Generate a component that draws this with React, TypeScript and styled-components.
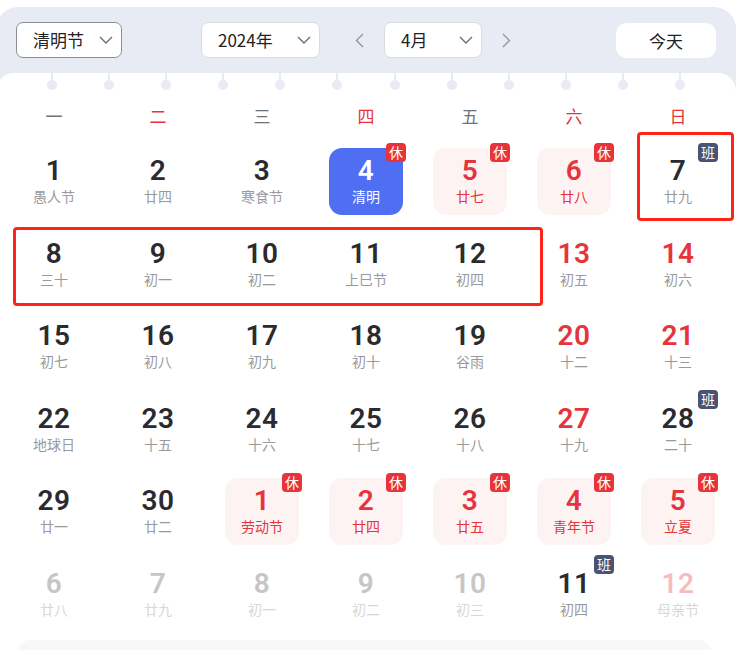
import React from 'react'
import styled, { createGlobalStyle } from 'styled-components'

type Kind = 'normal' | 'weekend' | 'rest' | 'today' | 'other' | 'otherRed'

type Day = {
    n: number,
    lunar: string,
    kind: Kind,
    badge?: '休' | '班',
}

const GlobalStyle = createGlobalStyle`
    html, body {
        margin: 0;
        padding: 0;
        background: #ffffff;
    }
    body {
        font-family: "Noto Sans CJK SC", "Noto Sans", sans-serif;
        color: #222;
    }
`

const d = (n: number, lunar: string, kind: Kind = 'normal', badge?: '休' | '班'): Day => ({ n, lunar, kind, badge })

const days: Day[] = [
    d(1, '愚人节'), d(2, '廿四'), d(3, '寒食节'), d(4, '清明', 'today', '休'), d(5, '廿七', 'rest', '休'), d(6, '廿八', 'rest', '休'), d(7, '廿九', 'normal', '班'),
    d(8, '三十'), d(9, '初一'), d(10, '初二'), d(11, '上巳节'), d(12, '初四'), d(13, '初五', 'weekend'), d(14, '初六', 'weekend'),
    d(15, '初七'), d(16, '初八'), d(17, '初九'), d(18, '初十'), d(19, '谷雨'), d(20, '十二', 'weekend'), d(21, '十三', 'weekend'),
    d(22, '地球日'), d(23, '十五'), d(24, '十六'), d(25, '十七'), d(26, '十八'), d(27, '十九', 'weekend'), d(28, '二十', 'normal', '班'),
    d(29, '廿一'), d(30, '廿二'), d(1, '劳动节', 'rest', '休'), d(2, '廿四', 'rest', '休'), d(3, '廿五', 'rest', '休'), d(4, '青年节', 'rest', '休'), d(5, '立夏', 'rest', '休'),
    d(6, '廿八', 'other'), d(7, '廿九', 'other'), d(8, '初一', 'other'), d(9, '初二', 'other'), d(10, '初三', 'other'), d(11, '初四', 'normal', '班'), d(12, '母亲节', 'otherRed'),
]

const weekdays = [
    { label: '一', red: false },
    { label: '二', red: true },
    { label: '三', red: false },
    { label: '四', red: true },
    { label: '五', red: false },
    { label: '六', red: true },
    { label: '日', red: true },
]

const numColor: Record<Kind, string> = {
    normal: '#2b2b2e',
    weekend: '#e6343c',
    rest: '#e6343c',
    today: '#ffffff',
    other: '#c6c6c6',
    otherRed: '#f6bcbf',
}

const lunarColor: Record<Kind, string> = {
    normal: '#999a9e',
    weekend: '#999a9e',
    rest: '#e6343c',
    today: '#ffffff',
    other: '#d8d8d8',
    otherRed: '#d8d8d8',
}

const Chevron = () => (
    <svg width="14" height="8" viewBox="0 0 14 8">
        <polyline points="1,1 7,7 13,1" fill="none" stroke="#6b6e75" strokeWidth="1.4" />
    </svg>
)

const Arrow = ({ dir }: { dir: 'left' | 'right' }) => (
    <svg width="9" height="15" viewBox="0 0 9 15">
        <polyline points={dir === 'left' ? '8,1 1.5,7.5 8,14' : '1,1 7.5,7.5 1,14'} fill="none" stroke="#92959c" strokeWidth="1.4" />
    </svg>
)

export default function App() {
    return (
        <Page>
            <GlobalStyle />
            <Panel>
                <Header>
                    <Select $width={106} $strong>
                        <span>清明节</span>
                        <Chevron />
                    </Select>
                    <Center>
                        <Select $width={119}>
                            <span>2024年</span>
                            <Chevron />
                        </Select>
                        <ArrowBtn $left={27} $right={13}><Arrow dir="left" /></ArrowBtn>
                        <Select $width={98}>
                            <span>4月</span>
                            <Chevron />
                        </Select>
                        <ArrowBtn $left={12} $right={0}><Arrow dir="right" /></ArrowBtn>
                    </Center>
                    <TodayBtn>今天</TodayBtn>
                </Header>
                <Body>
                    <Rings>
                        {Array.from({ length: 12 }).map((_, i) => <Ring key={i} />)}
                    </Rings>
                    <WeekRow>
                        {weekdays.map((w) => <WeekLabel key={w.label} $red={w.red}>{w.label}</WeekLabel>)}
                    </WeekRow>
                    <Grid>
                        {days.map((day, i) => (
                            <Cell key={i}>
                                <DayBox $kind={day.kind}>
                                    <Num $color={numColor[day.kind]}>{day.n}</Num>
                                    <Lunar $color={lunarColor[day.kind]}>{day.lunar}</Lunar>
                                    {day.badge && <Badge $work={day.badge === '班'}>{day.badge}</Badge>}
                                </DayBox>
                            </Cell>
                        ))}
                    </Grid>
                    <Footer />
                </Body>
            </Panel>
            <Mark style={{ left: 637, top: 132, width: 97, height: 89 }} />
            <Mark style={{ left: 13, top: 227, width: 530, height: 79 }} />
        </Page>
    )
}

const Page = styled.div`
    position: relative;
    width: 744px;
    height: 650px;
    overflow: hidden;
    padding-top: 7px;
    box-sizing: border-box;
`

const Panel = styled.div`
    margin-left: -4px;
    width: 740px;
    background: #e8ebf3;
    border-radius: 22px 22px 0 0;
`

const Header = styled.div`
    display: flex;
    align-items: center;
    height: 66px;
    padding: 0 20px;
`

const Select = styled.div<{ $width: number, $strong?: boolean }>`
    display: flex;
    align-items: center;
    justify-content: space-between;
    box-sizing: border-box;
    width: ${props => props.$width + 'px'};
    height: 36px;
    padding: 0 8px 0 16px;
    background: #ffffff;
    border: 1px solid ${props => props.$strong ? '#8b8e96' : '#d8dbe2'};
    border-radius: 7px;
    font-size: 17px;
    color: #222;

    span {
        line-height: 36px;
    }
`

const Center = styled.div`
    display: flex;
    align-items: center;
    margin-left: 79px;
`

const ArrowBtn = styled.div<{ $left: number, $right: number }>`
    display: flex;
    align-items: center;
    justify-content: center;
    width: 24px;
    height: 36px;
    margin-left: ${props => props.$left + 'px'};
    margin-right: ${props => props.$right + 'px'};
`

const TodayBtn = styled.div`
    display: flex;
    align-items: center;
    justify-content: center;
    margin-left: auto;
    width: 100px;
    height: 35px;
    background: #ffffff;
    border-radius: 10px;
    font-size: 17px;
    color: #222;
`

const Body = styled.div`
    background: #ffffff;
    border-radius: 18px 18px 0 0;
    padding: 0 6px;
    height: 600px;
`

const Rings = styled.div`
    display: grid;
    grid-template-columns: repeat(12, 57.15px);
    justify-content: center;
    height: 18px;
`

const Ring = styled.div`
    position: relative;
    height: 18px;

    &::before {
        content: "";
        position: absolute;
        left: 27.5px;
        top: 0;
        width: 2px;
        height: 9px;
        background: #e8ebf3;
    }
    &::after {
        content: "";
        position: absolute;
        left: 23.5px;
        top: 7px;
        width: 10px;
        height: 10px;
        border-radius: 50%;
        background: #e8ebf3;
    }
`

const WeekRow = styled.div`
    display: grid;
    grid-template-columns: repeat(7, 104px);
    height: 49px;
    align-items: center;
`

const WeekLabel = styled.div<{ $red: boolean }>`
    text-align: center;
    font-size: 17px;
    line-height: 20px;
    color: ${props => props.$red ? '#e6343c' : '#6f7278'};
`

const Grid = styled.div`
    display: grid;
    grid-template-columns: repeat(7, 104px);
    grid-auto-rows: 82.5px;
`

const Cell = styled.div`
    display: flex;
    align-items: center;
    justify-content: center;
`

const DayBox = styled.div<{ $kind: Kind }>`
    position: relative;
    display: flex;
    flex-direction: column;
    align-items: center;
    justify-content: center;
    width: 74px;
    height: 67px;
    border-radius: 13px;
    background: ${props => props.$kind === 'today' ? '#4f6ef1' : props.$kind === 'rest' ? '#fdf3f3' : 'transparent'};
`

const Num = styled.div<{ $color: string }>`
    font-family: Roboto, "DejaVu Sans Condensed", sans-serif;
    font-weight: 600;
    font-size: 28px;
    line-height: 30px;
    letter-spacing: 0.5px;
    color: ${props => props.$color};
`

const Lunar = styled.div<{ $color: string }>`
    font-size: 14px;
    line-height: 20px;
    color: ${props => props.$color};
`

const Badge = styled.div<{ $work: boolean }>`
    position: absolute;
    top: -5px;
    right: -3px;
    width: 20px;
    height: 19px;
    border-radius: 4px;
    background: ${props => props.$work ? '#4b5373' : '#e8333b'};
    color: #ffffff;
    font-size: 14px;
    line-height: 19px;
    text-align: center;
`

const Footer = styled.div`
    margin: 5px 18px 0 15px;
    height: 40px;
    border-radius: 14px;
    background: #f7f8fa;
`

const Mark = styled.div`
    position: absolute;
    box-sizing: border-box;
    border: 3px solid #ff2418;
    border-radius: 4px;
`
